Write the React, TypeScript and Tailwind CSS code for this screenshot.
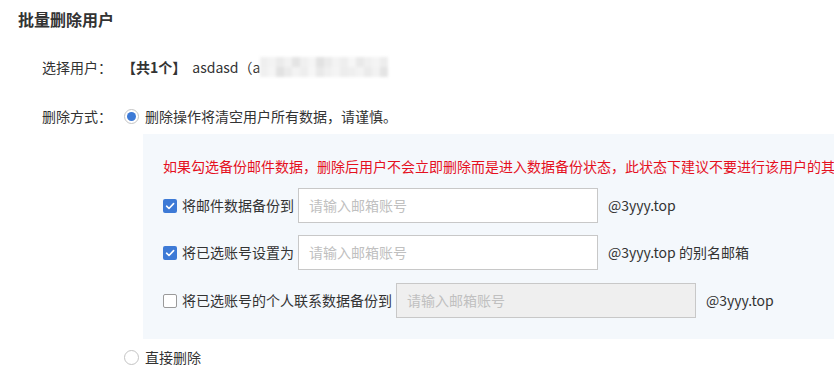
import React from "react";

const font = { fontFamily: '"Noto Sans CJK SC", "Noto Sans", sans-serif' };

function Checkbox({ checked }: { checked: boolean }) {
  return checked ? (
    <span className="flex h-[14px] w-[14px] shrink-0 items-center justify-center rounded-[2px] bg-[#3d7ad6]">
      <svg width="10" height="10" viewBox="0 0 10 10" fill="none">
        <path d="M1.6 5.2 L4 7.5 L8.6 2.6" stroke="white" strokeWidth="1.6" strokeLinecap="round" strokeLinejoin="round" />
      </svg>
    </span>
  ) : (
    <span className="h-[14px] w-[14px] shrink-0 rounded-[2px] border border-[#9a9a9a] bg-white" />
  );
}

function Radio({ checked }: { checked: boolean }) {
  return (
    <span className="flex h-[15px] w-[15px] shrink-0 items-center justify-center rounded-full border border-[#c4c4c4] bg-white">
      {checked && <span className="h-[9px] w-[9px] rounded-full bg-[#3d7ad6]" />}
    </span>
  );
}

function Input({ disabled }: { disabled?: boolean }) {
  return (
    <div
      className={`flex h-[35px] w-[300px] shrink-0 items-center border border-[#c8c8c8] pl-[10px] text-[14px] text-[#c0c0c0] ${
        disabled ? "bg-[#efefef]" : "bg-white"
      }`}
    >
      请输入邮箱账号
    </div>
  );
}

const mosaic = [
  "#efefef", "#f3f3f3", "#ebebeb", "#f2f2f2", "#e4e4e4", "#f0f0f0", "#f5f5f5", "#e2e2e2", "#ebebeb", "#f3f3f3",
  "#eeeeee", "#f6f6f6", "#e9e9e9", "#f0f0f0", "#f4f4f4", "#ededed",
];

export default function App() {
  return (
    <div className="w-full overflow-hidden bg-white text-[#333]" style={font}>
      <div className="flex h-[38px] items-center pl-[18px] text-[16px] font-bold text-[#333]">批量删除用户</div>

      <div className="pl-[42px]">
        <div className="mt-[14px] flex h-[30px] items-center text-[14px]">
          <span className="w-[80px] shrink-0">选择用户：</span>
          <span className="font-bold">【共1个】</span>
          <span className="ml-[6px]">asdasd（a</span>
          <div className="flex h-[20px] overflow-hidden blur-[1.5px]">
            {mosaic.map((c, i) => (
              <div key={i} className="flex flex-col">
                <div className="h-[10px] w-[8px]" style={{ backgroundColor: c }} />
                <div className="h-[10px] w-[8px]" style={{ backgroundColor: mosaic[(i + 5) % mosaic.length] }} />
              </div>
            ))}
          </div>
        </div>

        <div className="mt-[19px] flex h-[30px] items-center text-[14px]">
          <span className="w-[82px] shrink-0">删除方式：</span>
          <Radio checked />
          <span className="ml-[6px]">删除操作将清空用户所有数据，请谨慎。</span>
        </div>

        <div className="ml-[101px] mt-[3px] bg-[#f4f8fc] pb-[21px] pl-[20px] pt-[22px] text-[14px]">
          <div className="whitespace-nowrap leading-[20px] text-[#e5101f]">
            如果勾选备份邮件数据，删除后用户不会立即删除而是进入数据备份状态，此状态下建议不要进行该用户的其他操作。
          </div>
          <div className="mt-[12px] flex h-[35px] items-center whitespace-nowrap">
            <Checkbox checked />
            <span className="ml-[5px] mr-[4px]">将邮件数据备份到</span>
            <Input />
            <span className="ml-[10px]">@3yyy.top</span>
          </div>
          <div className="mt-[12px] flex h-[35px] items-center whitespace-nowrap">
            <Checkbox checked />
            <span className="ml-[5px] mr-[4px]">将已选账号设置为</span>
            <Input />
            <span className="ml-[10px]">@3yyy.top 的别名邮箱</span>
          </div>
          <div className="mt-[13px] flex h-[35px] items-center whitespace-nowrap">
            <Checkbox checked={false} />
            <span className="ml-[5px] mr-[4px]">将已选账号的个人联系数据备份到</span>
            <Input disabled />
            <span className="ml-[10px]">@3yyy.top</span>
          </div>
        </div>

        <div className="mt-[3px] flex h-[30px] items-center pl-[82px] text-[14px]">
          <Radio checked={false} />
          <span className="ml-[6px]">直接删除</span>
        </div>
      </div>
    </div>
  );
}
